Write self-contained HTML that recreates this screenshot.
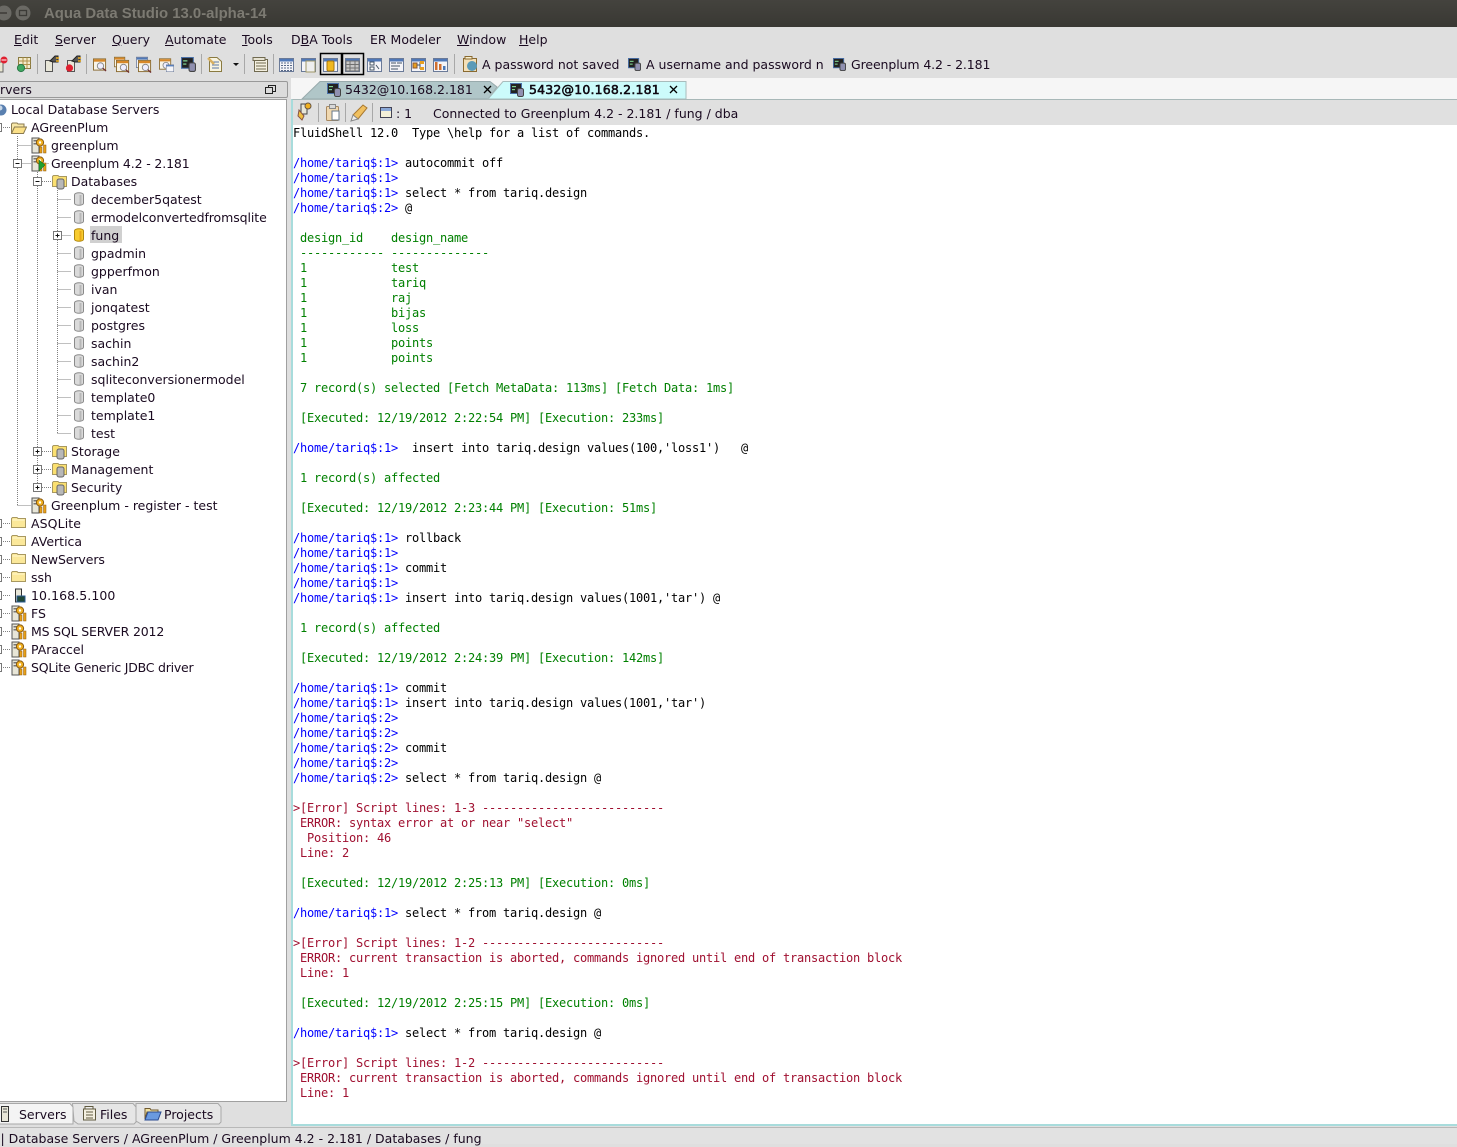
<!DOCTYPE html>
<html><head><meta charset="utf-8"><title>Aqua Data Studio 13.0-alpha-14</title>
<style>
html,body{margin:0;padding:0}
body{width:1457px;height:1144px;overflow:hidden;background:#dfdfdf;position:relative;font-family:"DejaVu Sans","Liberation Sans",sans-serif;font-size:12.5px;color:#1a0a20}
.a{position:absolute;white-space:pre}
.m{top:31px;line-height:17px}
.t{line-height:18px;height:18px;margin-top:1px}
u{text-underline-offset:1px}
#con{position:absolute;left:293px;top:126px;margin:0;font-family:"DejaVu Sans Mono","Liberation Mono",monospace;font-size:12px;line-height:15px;letter-spacing:-.225px;color:#000}
.p{color:#0000ff}.g{color:#008000}.r{color:#a01030}
svg{position:absolute;overflow:visible}
</style></head><body>
<svg width="0" height="0" style="left:0;top:0"><defs>
<symbol id="srv" viewBox="0 0 16 16" overflow="visible"><rect x="1" y="1" width="7" height="15" fill="#e8e6d8" stroke="#555"/><rect x="2.5" y="3" width="4" height="1.5" fill="#777"/><rect x="2.5" y="6" width="4" height="1.5" fill="#777"/><circle cx="9" cy="5.5" r="3.6" fill="#f0b020" stroke="#8a5a10"/><circle cx="9" cy="5.5" r="1.2" fill="#fff"/><rect x="8.5" y="10" width="2.5" height="6" fill="#e8a018" stroke="#8a5a10" stroke-width=".5"/><rect x="12.5" y="8" width="2.5" height="8" fill="#e8a018" stroke="#8a5a10" stroke-width=".5"/></symbol>
<symbol id="cyl" viewBox="0 0 10 14"><path d="M.5 3C.5 0 9.5 0 9.5 3V11C9.5 14 .5 14 .5 11Z" fill="#dadada" stroke="#8a8a8a"/><path d="M6.5 3V12.5" stroke="#b8b8b8" stroke-width="2"/></symbol>
<symbol id="cyly" viewBox="0 0 10 14"><path d="M.5 3C.5 0 9.5 0 9.5 3V11C9.5 14 .5 14 .5 11Z" fill="#f8cc30" stroke="#b08810"/><path d="M6.5 3V12.5" stroke="#e8a818" stroke-width="2"/></symbol>
<symbol id="fold" viewBox="0 0 16 14"><path d="M.5 1.5 1.5 .5H6L7 1.5H14.5V10.5H.5Z" fill="#fbe89a" stroke="#a89860"/><path d="M1.5 3H13.5" stroke="#fff8d0"/></symbol>
<symbol id="ofold" viewBox="0 0 16 14"><path d="M.5 12.500V3L1.500 2H6L7 3H13V6" fill="#f8e8a8" stroke="#8a7a50"/><path d="M.5 12.500 3.500 6H15.500L12.500 12.500Z" fill="#fbe088" stroke="#8a7a50"/></symbol>
<symbol id="fcyl" viewBox="0 0 16 16"><path d="M.5 2.500 1.500 1.500H6L7 2.500H14.500V12.500H.5Z" fill="#fbe070" stroke="#a89860"/><rect x="5" y="5" width="7" height="10" rx="2" fill="#b8b8b8" stroke="#666"/></symbol>
<symbol id="tabdb" viewBox="0 0 14 14"><rect x=".5" y=".5" width="11" height="10" fill="#222" stroke="#4a70a8"/><rect x="2" y="3" width="4" height="1.2" fill="#7ed090"/><rect x="2" y="6" width="3" height="1.2" fill="#7ed090"/><rect x="7.5" y="5.5" width="6" height="8" rx="1.6" fill="#9090b0" stroke="#444"/></symbol>
<symbol id="win" viewBox="0 0 15 15"><rect x=".5" y="1.5" width="14" height="13" fill="#f4f4f8" stroke="#6a7a98"/><rect x="1" y="2" width="13" height="2.5" fill="#4f78b8"/></symbol>
<symbol id="qw" viewBox="0 0 15 15"><rect x=".5" y="1.5" width="13" height="12" fill="#f8f4e8" stroke="#8a6a30"/><rect x="1" y="2" width="12" height="2.5" fill="#d88828"/><circle cx="8" cy="9" r="3.4" fill="#eef" stroke="#888"/><path d="M10.5 11.5 14 14.5" stroke="#703030" stroke-width="1.4"/></symbol>
</defs></svg>

<!-- title bar -->
<div class="a" style="left:0;top:0;width:1457px;height:27px;background:linear-gradient(#44433e,#393833)"></div>
<svg style="left:0;top:0" width="40" height="27"><circle cx="4" cy="13" r="7.5" fill="#6a6964"/><path d="M0 13H7" stroke="#3c3b37" stroke-width="1.5"/><circle cx="23" cy="13" r="7.5" fill="#6a6964"/><rect x="19.5" y="10.5" width="7" height="5" fill="none" stroke="#3c3b37" stroke-width="1.3"/></svg>
<div class="a" style="left:44px;top:6px;font-family:'Liberation Sans',sans-serif;font-weight:bold;font-size:14.9px;line-height:17px;color:#7c7a72">Aqua Data Studio 13.0-alpha-14</div>

<!-- menu -->
<div class="a m" style="left:14px"><u>E</u>dit</div>
<div class="a m" style="left:55px"><u>S</u>erver</div>
<div class="a m" style="left:112px"><u>Q</u>uery</div>
<div class="a m" style="left:165px"><u>A</u>utomate</div>
<div class="a m" style="left:242px"><u>T</u>ools</div>
<div class="a m" style="left:291px">D<u>B</u>A Tools</div>
<div class="a m" style="left:370px">ER Modeler</div>
<div class="a m" style="left:457px"><u>W</u>indow</div>
<div class="a m" style="left:519px"><u>H</u>elp</div>

<!-- toolbar -->
<svg style="left:0;top:50px" width="1000" height="30">
<g fill="#a8a8a8"><rect x="37" y="4" width="1" height="20"/><rect x="86" y="4" width="1" height="20"/><rect x="201" y="4" width="1" height="20"/><rect x="244" y="4" width="1" height="20"/><rect x="273" y="4" width="1" height="20"/><rect x="454" y="4" width="1" height="20"/></g>
<rect x="-2" y="12" width="5" height="10" fill="#e8e6d0" stroke="#666"/><circle cx="4" cy="10" r="3.5" fill="#e02030"/><rect x="1.5" y="9.5" width="5" height="1" fill="#fff"/>
<rect x="18.5" y="7.5" width="12" height="11" fill="#f4eccc" stroke="#8a7a40"/><path d="M18.5 11H30.5M18.5 14.5H30.5M23 7.5V18.5M27 7.5V18.5" stroke="#b09048"/><circle cx="21" cy="18" r="3.6" fill="#40a860" stroke="#2a7a48"/>
<rect x="45.500" y="10.500" width="7" height="11" fill="#e8e6d8" stroke="#555"/><path d="M50 11 55 6H58V12H53Z" fill="#555" stroke="#222"/><path d="M56 8H59M56 11H59" stroke="#f0b020" stroke-width="1.500"/>
<rect x="67.500" y="10.500" width="7" height="11" fill="#e8e6d8" stroke="#555"/><path d="M72 11 77 6H80V12H75Z" fill="#555" stroke="#222"/><path d="M78 8H81M78 11H81" stroke="#f0b020" stroke-width="1.500"/><circle cx="69.500" cy="18" r="3.600" fill="#e02030"/>
<use href="#qw" x="93" y="7" width="14" height="15"/>
<use href="#qw" x="114" y="6" width="12" height="12"/><use href="#qw" x="116" y="9" width="14" height="14"/>
<use href="#win" x="136" y="6" width="12" height="12"/><use href="#qw" x="138" y="9" width="14" height="14"/>
<use href="#qw" x="159" y="7" width="13" height="14"/><use href="#win" x="166" y="14" width="8" height="8"/>
<use href="#tabdb" x="181" y="7" width="15" height="15"/>
<path d="M209.500 7.500H217L221.500 11.500V21.500H209.500Z" fill="#f8f4e0" stroke="#8a7a40"/><path d="M212 12H219M212 15H219M212 18H219" stroke="#5a78a8"/><path d="M208 8 214 14" stroke="#d8b060" stroke-width="2.500"/>
<path d="M233 13H239L236 16Z" fill="#111"/>
<path d="M254.500 9.500H267.500V21.500H254.500Z" fill="#f4f0e0" stroke="#706a50"/><path d="M253 7.500H265V10.500H253ZM256 13H266M256 16H266M256 19H266" fill="#e8e4d4" stroke="#706a50"/>
<use href="#win" x="279" y="7" width="15" height="15"/><path d="M281 13H292M281 15.500H292M281 18H292M281 20.500H292" stroke="#5a6a88" stroke-dasharray="2 1"/>
<use href="#win" x="301" y="7" width="15" height="15"/><rect x="306" y="11" width="9" height="11" fill="#eee" stroke="#a09868"/>
<rect x="320.500" y="3.500" width="21" height="21" fill="none" stroke="#000" stroke-width="1.500"/><use href="#win" x="323" y="7" width="15" height="15"/><rect x="327" y="11" width="7" height="10" rx="1.500" fill="#f0b820" stroke="#a87810"/>
<rect x="342.500" y="3.500" width="21" height="21" fill="none" stroke="#000" stroke-width="1.500"/><use href="#win" x="345" y="7" width="15" height="15"/><path d="M346 11H359V21H346ZM346 14.500H359M346 18H359M350 11V21M355 11V21" fill="#c8c8c8" stroke="#707070"/>
<use href="#win" x="367" y="7" width="15" height="15"/><path d="M370 12H374V15H370ZM370 17H374V20H370ZM376 15 379 19" fill="#fff" stroke="#456"/>
<use href="#win" x="389" y="7" width="15" height="15"/><path d="M391 13H396M397 13H402M391 16H400M391 19H398" stroke="#456"/>
<use href="#win" x="411" y="7" width="15" height="15"/><rect x="413" y="13" width="4" height="5" fill="#e8a020" stroke="#853"/><path d="M417 15H420M420 12V19" stroke="#456"/><rect x="420" y="11" width="4" height="3" fill="#e8a020"/><rect x="420" y="17" width="4" height="3" fill="#e8a020"/>
<use href="#win" x="433" y="7" width="15" height="15"/><rect x="435" y="12" width="2.500" height="8" fill="#d07030"/><rect x="439" y="14" width="2.500" height="6" fill="#d07030"/><rect x="443" y="16" width="2.500" height="4" fill="#4a78b8"/>
<rect x="463.500" y="8.500" width="13" height="13" fill="#f4e0b8" stroke="#8a6a30"/><path d="M465 6.500H472V9H465Z" fill="#f8f0d0" stroke="#8a6a30"/><circle cx="472" cy="16" r="5" fill="#5a9ab8"/>
<use href="#tabdb" x="628" y="8" width="13" height="13"/><use href="#tabdb" x="833" y="8" width="13" height="13"/>
</svg>
<div class="a" style="left:482px;top:56px;line-height:17px">A password not saved</div>
<div class="a" style="left:646px;top:56px;line-height:17px">A username and password n</div>
<div class="a" style="left:851px;top:56px;line-height:17px;letter-spacing:-.1px">Greenplum 4.2 - 2.181</div>

<!-- left panel header -->
<div class="a" style="left:-4px;top:81px;width:290px;height:15px;background:#dcdcdc;border:1px solid #999;border-radius:2px"></div>
<div class="a" style="left:0;top:81px;line-height:17px">rvers</div>
<svg style="left:265px;top:85px" width="12" height="10"><rect x=".5" y="2.500" width="7" height="6" fill="none" stroke="#222"/><path d="M3.500 2.500V.5H10.500V6.500H7.500" fill="none" stroke="#222"/></svg>

<!-- tree -->
<div class="a" style="left:-2px;top:99px;width:287px;height:1001px;background:#fff;border:1px solid #a0a0a0"></div>
<svg style="left:0;top:100px" width="286" height="600" fill="none">
<g stroke="#808080" stroke-dasharray="1 1">
<path d="M17.500 36V405.500M37.500 72V387.500M57.500 90V333.500"/>
<path d="M17.500 45.500H31M37.500 63.500H49M17.500 63.500H31M57.500 99.500H71M57.500 117.500H71M62.500 135.500H71M57.500 153.500H71M57.500 171.500H71M57.500 189.500H71M57.500 207.500H71M57.500 225.500H71M57.500 243.500H71M57.500 261.500H71M57.500 279.500H71M57.500 297.500H71M57.500 315.500H71M57.500 333.500H71M42 81.500H51M42 351.500H51M42 369.500H51M42 387.500H51M17.500 405.500H31M3 27.500H10M3 423.500H10M3 441.500H10M3 459.500H10M3 477.500H10M3 495.500H10M3 513.500H10M3 531.500H10M3 549.500H10M3 567.500H10"/>
</g>
<g stroke="#777" fill="#fff">
<rect x="-2.500" y="23.500" width="4" height="8"/><rect x="-2.500" y="419.500" width="4" height="8"/><rect x="-2.500" y="437.500" width="4" height="8"/><rect x="-2.500" y="455.500" width="4" height="8"/><rect x="-2.500" y="473.500" width="4" height="8"/><rect x="-2.500" y="491.500" width="4" height="8"/><rect x="-2.500" y="509.500" width="4" height="8"/><rect x="-2.500" y="527.500" width="4" height="8"/><rect x="-2.500" y="545.500" width="4" height="8"/><rect x="-2.500" y="563.500" width="4" height="8"/>
<rect x="13.500" y="59.500" width="8" height="8"/><rect x="33.500" y="77.500" width="8" height="8"/><rect x="53.500" y="131.500" width="8" height="8"/><rect x="33.500" y="347.500" width="8" height="8"/><rect x="33.500" y="365.500" width="8" height="8"/><rect x="33.500" y="383.500" width="8" height="8"/>
</g>
<path d="M15.500 63.500H19.500M35.500 81.500H39.500M55.500 135.500H59.500M57.500 133.500V137.500M35.500 351.500H39.500M37.500 349.500V353.500M35.500 369.500H39.500M37.500 367.500V371.500M35.500 387.500H39.500M37.500 385.500V389.500" stroke="#111"/>
<circle cx="1" cy="10" r="5.500" fill="#5a80b0"/><circle cx="0" cy="8" r="2.500" fill="#c8d8e8"/>
<use href="#ofold" x="11" y="21" width="16" height="14"/>
<use href="#srv" x="31" y="37" width="16" height="16"/>
<use href="#srv" x="31" y="55" width="16" height="16"/><path d="M39 60 45 65 39 71Z" fill="#20a030" stroke="#106018" stroke-width=".5"/>
<use href="#fcyl" x="52" y="74" width="16" height="16"/>
<use href="#cyl" x="74" y="92" width="10" height="14"/><use href="#cyl" x="74" y="110" width="10" height="14"/><use href="#cyly" x="74" y="128" width="10" height="14"/><use href="#cyl" x="74" y="146" width="10" height="14"/><use href="#cyl" x="74" y="164" width="10" height="14"/><use href="#cyl" x="74" y="182" width="10" height="14"/><use href="#cyl" x="74" y="200" width="10" height="14"/><use href="#cyl" x="74" y="218" width="10" height="14"/><use href="#cyl" x="74" y="236" width="10" height="14"/><use href="#cyl" x="74" y="254" width="10" height="14"/><use href="#cyl" x="74" y="272" width="10" height="14"/><use href="#cyl" x="74" y="290" width="10" height="14"/><use href="#cyl" x="74" y="308" width="10" height="14"/><use href="#cyl" x="74" y="326" width="10" height="14"/>
<use href="#fcyl" x="52" y="344" width="16" height="16"/><use href="#fcyl" x="52" y="362" width="16" height="16"/><use href="#fcyl" x="52" y="380" width="16" height="16"/>
<use href="#srv" x="31" y="397" width="16" height="16"/>
<use href="#fold" x="11" y="417" width="16" height="14"/><use href="#fold" x="11" y="435" width="16" height="14"/><use href="#fold" x="11" y="453" width="16" height="14"/><use href="#fold" x="11" y="471" width="16" height="14"/>
<rect x="15.500" y="489" width="6" height="13" fill="#e8e6d8" stroke="#333"/><rect x="17" y="496" width="8" height="6" fill="#204838" stroke="#2a5a90"/>
<use href="#srv" x="11" y="505" width="16" height="16"/><use href="#srv" x="11" y="523" width="16" height="16"/><use href="#srv" x="11" y="541" width="16" height="16"/><use href="#srv" x="11" y="559" width="16" height="16"/>
</svg>
<div class="a" style="left:90px;top:226px;width:32px;height:17px;background:#d0d0d0"></div>
<div class="a t" style="left:11px;top:100px;letter-spacing:.04px">Local Database Servers</div>
<div class="a t" style="left:31px;top:118px">AGreenPlum</div>
<div class="a t" style="left:51px;top:136px">greenplum</div>
<div class="a t" style="left:51px;top:154px;letter-spacing:-.14px">Greenplum 4.2 - 2.181</div>
<div class="a t" style="left:71px;top:172px">Databases</div>
<div class="a t" style="left:91px;top:190px">december5qatest</div>
<div class="a t" style="left:91px;top:208px;letter-spacing:-.08px">ermodelconvertedfromsqlite</div>
<div class="a t" style="left:91px;top:226px">fung</div>
<div class="a t" style="left:91px;top:244px">gpadmin</div>
<div class="a t" style="left:91px;top:262px">gpperfmon</div>
<div class="a t" style="left:91px;top:280px">ivan</div>
<div class="a t" style="left:91px;top:298px">jonqatest</div>
<div class="a t" style="left:91px;top:316px">postgres</div>
<div class="a t" style="left:91px;top:334px">sachin</div>
<div class="a t" style="left:91px;top:352px">sachin2</div>
<div class="a t" style="left:91px;top:370px">sqliteconversionermodel</div>
<div class="a t" style="left:91px;top:388px">template0</div>
<div class="a t" style="left:91px;top:406px">template1</div>
<div class="a t" style="left:91px;top:424px">test</div>
<div class="a t" style="left:71px;top:442px">Storage</div>
<div class="a t" style="left:71px;top:460px">Management</div>
<div class="a t" style="left:71px;top:478px">Security</div>
<div class="a t" style="left:51px;top:496px">Greenplum - register - test</div>
<div class="a t" style="left:31px;top:514px;letter-spacing:.1px">ASQLite</div>
<div class="a t" style="left:31px;top:532px">AVertica</div>
<div class="a t" style="left:31px;top:550px;letter-spacing:-.1px">NewServers</div>
<div class="a t" style="left:31px;top:568px">ssh</div>
<div class="a t" style="left:31px;top:586px;letter-spacing:.08px">10.168.5.100</div>
<div class="a t" style="left:31px;top:604px">FS</div>
<div class="a t" style="left:31px;top:622px;letter-spacing:-.17px">MS SQL SERVER 2012</div>
<div class="a t" style="left:31px;top:640px">PAraccel</div>
<div class="a t" style="left:31px;top:658px;letter-spacing:-.23px">SQLite Generic JDBC driver</div>

<!-- bottom left tabs -->
<svg style="left:0;top:1100px" width="230" height="26">
<path d="M72.500 3.500H133L136 7V22L134 24H78L74 21Z" fill="#e6e6e6" stroke="#a8a8a8"/>
<path d="M136 3.500H218L221 7V22L219 24H141L136 21Z" fill="#e6e6e6" stroke="#a8a8a8"/>
<path d="M-1 3.500H70L73 7V24H-1Z" fill="#f4f4f4" stroke="#a8a8a8"/>
<rect x="1.500" y="6.500" width="7" height="15" fill="#e8e6d8" stroke="#333"/><path d="M3 9H7M3 12H7" stroke="#555"/>
<path d="M83.500 9H95.500V20H83.500Z" fill="#f4f0e0" stroke="#605a40"/><path d="M85 6.500H93V9H85ZM86 12H93M86 15H93M86 18H93" fill="#eee" stroke="#605a40"/>
<path d="M145 8.500H150L151 10H158V12H147L145 19Z" fill="#f0e0a0" stroke="#705a30"/><path d="M145 20 148 12H161L158 20Z" fill="#6a9ae0" stroke="#2a4a90"/>
</svg>
<div class="a" style="left:19px;top:1106px;line-height:17px">Servers</div>
<div class="a" style="left:100px;top:1106px;line-height:17px">Files</div>
<div class="a" style="left:164px;top:1106px;line-height:17px">Projects</div>

<!-- status -->
<div class="a" style="left:0;top:1127px;width:1457px;height:1px;background:#b8b8b8"></div>
<div class="a" style="left:0;top:1128px;width:1457px;height:16px;background:#e2e2e2"></div>
<div class="a" style="left:.5px;top:1130px;line-height:17px">| Database Servers / AGreenPlum / Greenplum 4.2 - 2.181 / Databases / fung</div>

<!-- right: tabs -->
<div class="a" style="left:291px;top:78px;width:1166px;height:21px;background:#f6f6f6"></div>
<svg style="left:291px;top:78px" width="420" height="22">
<path d="M11 21 29 3.500H199L206 9 197 21Z" fill="#b0c6c8" stroke="#98aaac"/>
<path d="M197 21 212 3.500H395V21Z" fill="#ccfbfb" stroke="#a8bcbc"/>
<use href="#tabdb" x="36" y="5" width="14" height="14"/><use href="#tabdb" x="219" y="5" width="14" height="14"/>
<path d="M193 8 200 15M200 8 193 15M379 8 386 15M386 8 379 15" stroke="#000" stroke-width="1.300"/>
</svg>
<div class="a" style="left:345px;top:81px;line-height:17px">5432@10.168.2.181</div>
<div class="a" style="left:529px;top:81px;line-height:17px;-webkit-text-stroke:.5px #000;letter-spacing:.18px">5432@10.168.2.181</div>

<!-- right: console -->
<div class="a" style="left:291px;top:99px;width:1166px;height:1027px;background:#fff;box-sizing:border-box;border-left:2px solid #a8dcdc;border-top:1px solid #a8b8b8;border-bottom:2px solid #a8dcdc"></div>
<div class="a" style="left:293px;top:100px;width:1164px;height:25px;background:#e0e0e0"></div>
<svg style="left:293px;top:100px" width="130" height="25">
<g fill="#a8a8a8"><rect x="25" y="3" width="1" height="19"/><rect x="52" y="3" width="1" height="19"/><rect x="79" y="3" width="1" height="19"/></g>
<path d="M8 4H14V14H8Z" fill="#e8e6d8" stroke="#444"/><circle cx="15" cy="6" r="3" fill="#f0b020" stroke="#654"/><path d="M6 10 11 16 9 20 5 16Z" fill="#f0c040" stroke="#854"/>
<rect x="33.500" y="6.500" width="12" height="14" rx="1" fill="#f0d8b0" stroke="#a88860"/><rect x="36.500" y="4.500" width="6" height="4" fill="#d8d8d8" stroke="#888"/><rect x="39" y="11" width="7" height="9" fill="#fff" stroke="#678"/>
<path d="M60 15 70 5 74 8 65 19Z" fill="#f0c060" stroke="#a87830"/><path d="M60 15 65 19 58 21Z" fill="#eee" stroke="#888"/>
<rect x="87.500" y="7.500" width="11" height="10" fill="#f4f0d8" stroke="#445"/><rect x="88" y="8" width="10" height="3" fill="#8aa8d8"/>
</svg>
<div class="a" style="left:396px;top:105px;line-height:17px">: 1</div>
<div class="a" style="left:433px;top:105px;line-height:17px">Connected to Greenplum 4.2 - 2.181 / fung / dba</div>

<pre id="con">FluidShell 12.0  Type \help for a list of commands.

<span class="p">/home/tariq$:1&gt;</span> autocommit off
<span class="p">/home/tariq$:1&gt;</span>
<span class="p">/home/tariq$:1&gt;</span> select * from tariq.design
<span class="p">/home/tariq$:2&gt;</span> @

<span class="g"> design_id    design_name
 ------------ --------------
 1            test
 1            tariq
 1            raj
 1            bijas
 1            loss
 1            points
 1            points

 7 record(s) selected [Fetch MetaData: 113ms] [Fetch Data: 1ms]

 [Executed: 12/19/2012 2:22:54 PM] [Execution: 233ms]</span>

<span class="p">/home/tariq$:1&gt;</span>  insert into tariq.design values(100,'loss1')   @

<span class="g"> 1 record(s) affected

 [Executed: 12/19/2012 2:23:44 PM] [Execution: 51ms]</span>

<span class="p">/home/tariq$:1&gt;</span> rollback
<span class="p">/home/tariq$:1&gt;</span>
<span class="p">/home/tariq$:1&gt;</span> commit
<span class="p">/home/tariq$:1&gt;</span>
<span class="p">/home/tariq$:1&gt;</span> insert into tariq.design values(1001,'tar') @

<span class="g"> 1 record(s) affected

 [Executed: 12/19/2012 2:24:39 PM] [Execution: 142ms]</span>

<span class="p">/home/tariq$:1&gt;</span> commit
<span class="p">/home/tariq$:1&gt;</span> insert into tariq.design values(1001,'tar')
<span class="p">/home/tariq$:2&gt;</span>
<span class="p">/home/tariq$:2&gt;</span>
<span class="p">/home/tariq$:2&gt;</span> commit
<span class="p">/home/tariq$:2&gt;</span>
<span class="p">/home/tariq$:2&gt;</span> select * from tariq.design @

<span class="r">&gt;[Error] Script lines: 1-3 --------------------------
 ERROR: syntax error at or near "select"
  Position: 46
 Line: 2</span>

<span class="g"> [Executed: 12/19/2012 2:25:13 PM] [Execution: 0ms]</span>

<span class="p">/home/tariq$:1&gt;</span> select * from tariq.design @

<span class="r">&gt;[Error] Script lines: 1-2 --------------------------
 ERROR: current transaction is aborted, commands ignored until end of transaction block
 Line: 1</span>

<span class="g"> [Executed: 12/19/2012 2:25:15 PM] [Execution: 0ms]</span>

<span class="p">/home/tariq$:1&gt;</span> select * from tariq.design @

<span class="r">&gt;[Error] Script lines: 1-2 --------------------------
 ERROR: current transaction is aborted, commands ignored until end of transaction block
 Line: 1</span></pre>
</body></html>
